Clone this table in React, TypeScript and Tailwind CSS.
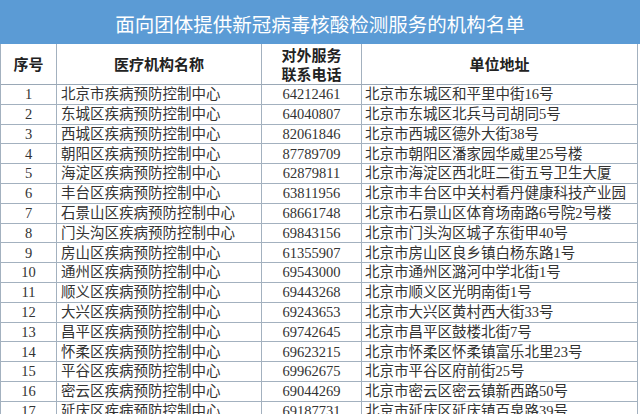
import React from "react";

const rows: [string, string, string, string][] = [
  ["1", "北京市疾病预防控制中心", "64212461", "北京市东城区和平里中街16号"],
  ["2", "东城区疾病预防控制中心", "64040807", "北京市东城区北兵马司胡同5号"],
  ["3", "西城区疾病预防控制中心", "82061846", "北京市西城区德外大街38号"],
  ["4", "朝阳区疾病预防控制中心", "87789709", "北京市朝阳区潘家园华威里25号楼"],
  ["5", "海淀区疾病预防控制中心", "62879811", "北京市海淀区西北旺二街五号卫生大厦"],
  ["6", "丰台区疾病预防控制中心", "63811956", "北京市丰台区中关村看丹健康科技产业园"],
  ["7", "石景山区疾病预防控制中心", "68661748", "北京市石景山区体育场南路6号院2号楼"],
  ["8", "门头沟区疾病预防控制中心", "69843156", "北京市门头沟区城子东街甲40号"],
  ["9", "房山区疾病预防控制中心", "61355907", "北京市房山区良乡镇白杨东路1号"],
  ["10", "通州区疾病预防控制中心", "69543000", "北京市通州区潞河中学北街1号"],
  ["11", "顺义区疾病预防控制中心", "69443268", "北京市顺义区光明南街1号"],
  ["12", "大兴区疾病预防控制中心", "69243653", "北京市大兴区黄村西大街33号"],
  ["13", "昌平区疾病预防控制中心", "69742645", "北京市昌平区鼓楼北街7号"],
  ["14", "怀柔区疾病预防控制中心", "69623215", "北京市怀柔区怀柔镇富乐北里23号"],
  ["15", "平谷区疾病预防控制中心", "69962675", "北京市平谷区府前街25号"],
  ["16", "密云区疾病预防控制中心", "69044269", "北京市密云区密云镇新西路50号"],
  ["17", "延庆区疾病预防控制中心", "69187731", "北京市延庆区延庆镇百泉路39号"],
];

const font = {
  fontFamily: '"Liberation Serif", "Noto Sans CJK SC", serif',
};

export default function App() {
  return (
    <div className="w-[640px] h-[414px] overflow-hidden bg-white" style={font}>
      <div className="h-[44px] bg-[#5b9bd5] flex items-center justify-center text-white text-[19.5px] leading-none pt-[4px] font-['Noto_Sans_CJK_SC',sans-serif]">
        面向团体提供新冠病毒核酸检测服务的机构名单
      </div>
      <div className="w-[638px] border-l border-[#a3b1bf]">
        <div className="grid grid-cols-[56px_205px_100px_276px] h-[41px] border-b border-[#9aa8b6] text-[15px] font-bold text-[#222] font-['Noto_Sans_CJK_SC',sans-serif]">
          <div className="border-r border-[#a3b1bf] flex items-center justify-center">序号</div>
          <div className="border-r border-[#a3b1bf] flex items-center justify-center">医疗机构名称</div>
          <div className="border-r border-[#a3b1bf] flex flex-col items-center justify-center leading-[19px]">
            <span>对外服务</span>
            <span>联系电话</span>
          </div>
          <div className="border-r border-[#a3b1bf] flex items-center justify-center">单位地址</div>
        </div>
        {rows.map((r) => (
          <div
            key={r[0]}
            className="grid grid-cols-[56px_205px_100px_276px] h-[19.8px] border-b border-[#a3b1bf] text-[14.5px] leading-none text-[#333]"
          >
            <div className="border-r border-[#a3b1bf] flex items-center justify-center">{r[0]}</div>
            <div className="border-r border-[#a3b1bf] flex items-center pl-[4px] whitespace-nowrap">{r[1]}</div>
            <div className="border-r border-[#a3b1bf] flex items-center justify-center">{r[2]}</div>
            <div className="border-r border-[#a3b1bf] flex items-center pl-[3px] whitespace-nowrap">{r[3]}</div>
          </div>
        ))}
      </div>
    </div>
  );
}
